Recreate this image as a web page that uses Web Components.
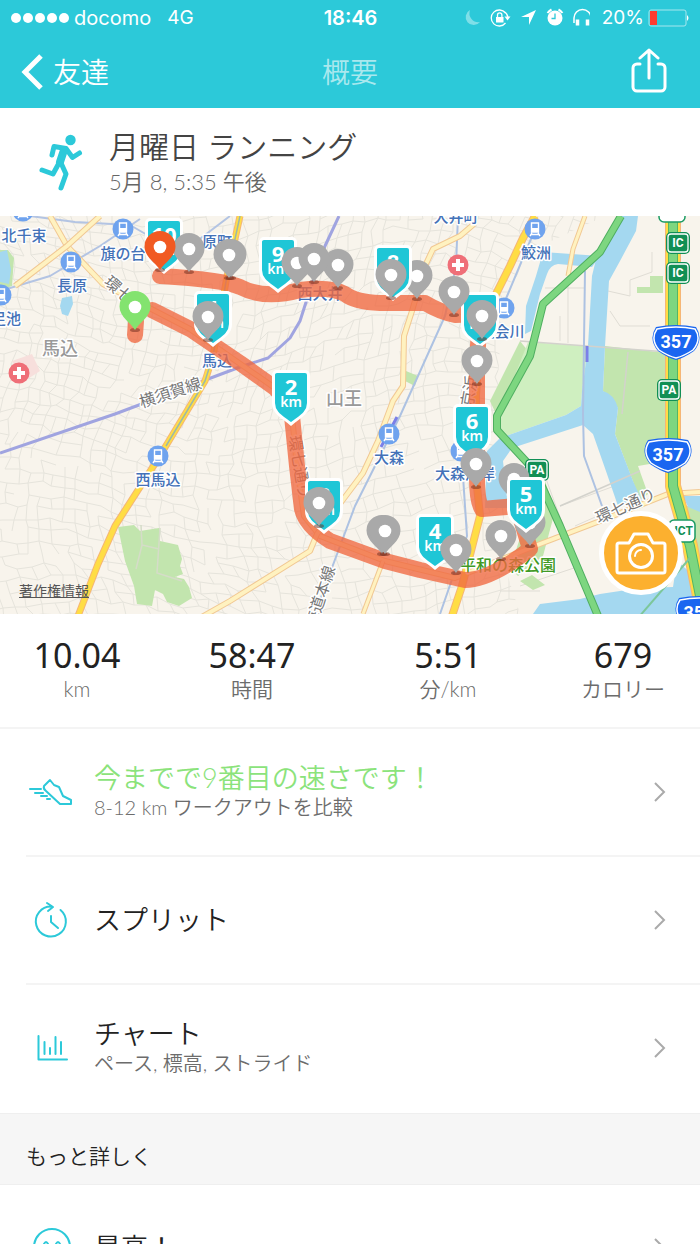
<!DOCTYPE html>
<html lang="ja">
<head>
<meta charset="utf-8">
<meta name="viewport" content="width=device-width, initial-scale=1">
<title>概要</title>
<style>
body {
    margin: 0;
    font-family: Lato, "Noto Sans CJK JP", sans-serif;
    color: #222;
    background-color: #fff;
    --teal: #2cc9d9;
    --muted: #6c6c6c;
    --line: #f4f4f4;
}
</style>
</head>
<body>
<workout-app>
    <status-bar slot="top" carrier="docomo" network="4G" time="18:46" battery="20%"></status-bar>
    <nav-bar slot="top" back="友達">概要</nav-bar>
    <workout-header>
        <span slot="title">月曜日 ランニング</span>
        <span slot="date">5月 8, 5:35 午後</span>
    </workout-header>
    <route-map></route-map>
    <stat-row>
        <stat-item value="10.04">km</stat-item>
        <stat-item value="58:47">時間</stat-item>
        <stat-item value="5:51">分/km</stat-item>
        <stat-item value="679">カロリー</stat-item>
    </stat-row>
    <detail-row icon="shoe" class="best">今までで9番目の速さです！<span slot="sub">8-12 km ワークアウトを比較</span></detail-row>
    <detail-row icon="split">スプリット</detail-row>
    <detail-row icon="chart" class="last">チャート<span slot="sub">ペース, 標高, ストライド</span></detail-row>
    <section-title>もっと詳しく</section-title>
    <detail-row icon="smile">最高！</detail-row>
</workout-app>

<script>
function define(name, html, setup) {
  const template = document.createElement('template');
  template.innerHTML = html;
  customElements.define(name, class extends HTMLElement {
    constructor() {
      super();
      this.attachShadow({ mode: 'open' });
      this.shadowRoot.appendChild(template.content.cloneNode(true));
    }
    connectedCallback() {
      if (setup) setup(this, this.shadowRoot);
    }
  });
}

define('workout-app', `
<style>
:host {
    display: flex;
    flex-direction: column;
    height: 100vh;
}
header {
    background-color: var(--teal);
}
main {
    flex: 1;
    min-height: 0;
    overflow-y: auto;
    scrollbar-width: none;
}
</style>
<header><slot name="top"></slot></header>
<main><slot></slot></main>
`);

define('status-bar', `
<style>
:host {
    display: grid;
    grid-template-columns: 1fr auto 1fr;
    align-items: center;
    height: 36px;
    padding: 0 10px 0 11px;
    color: #fff;
    font: 20px/24px Inter, sans-serif;
}
div {
    display: flex;
    align-items: center;
}
.dots {
    display: flex;
    gap: 2px;
    margin-right: 5px;
}
.dots i {
    width: 10px;
    height: 10px;
    border-radius: 50%;
    background-color: #fff;
}
.network {
    margin-left: 16px;
    font-size: 19px;
}
.time {
    font-weight: 600;
}
.right {
    justify-content: flex-end;
}
.battery {
    margin: 0 4px 0 12px;
    font-size: 19px;
}
svg {
    display: block;
}
</style>
<div>
    <span class="dots"><i></i><i></i><i></i><i></i><i></i></span>
    <span class="carrier"></span><span class="network"></span>
</div>
<span class="time"></span>
<div class="right">
    <svg width="130" height="24" viewBox="460 6 130 24" fill="none" stroke="#fff">
        <path d="M470 10a8 8 0 1 0 10 12a9 9 0 0 1-10-12z" fill="#7fdfe8" stroke="none"/>
        <path d="M505.500 13a8 8 0 1 0 0 10M504 11.500a8 8 0 0 1 4 6" stroke-width="1.300"/>
        <path d="M504.500 16.500h6l-3 4z" fill="#fff" stroke="none"/>
        <rect x="496" y="17" width="7.500" height="5.500" fill="#fff" stroke="none"/>
        <path d="M497.500 17v-2a2.200 2.200 0 0 1 4.400 0v2" stroke-width="1.300"/>
        <path d="M521 17l15-7l-7 15v-8z" fill="#fff" stroke="none"/>
        <circle cx="555" cy="18" r="7.500" fill="#fff" stroke="none"/>
        <path d="M547.500 13a12 12 0 0 1 4-3.500M558.500 9.500a12 12 0 0 1 4 3.500" stroke-width="2"/>
        <path d="M555 13.500v5h-3.500" stroke="#2cc9d9" stroke-width="1.300"/>
        <path d="M574 23v-5a8.500 8.500 0 0 1 17 0v5" stroke-width="1.500"/>
        <path d="M577.500 19.500v6M587.500 19.500v6" stroke-width="3.500"/>
    </svg>
    <span class="battery"></span>
    <svg width="42" height="18" viewBox="0 0 42 18">
        <rect x="1" y="1" width="37" height="16" rx="2" fill="none" stroke="#a5e7ee"/>
        <rect x="2" y="2" width="7" height="14" fill="#ff3b30"/>
        <path d="M39 6q3 3 0 6z" fill="#fff"/>
    </svg>
</div>
`, (el, root) => {
  for (const key of ['carrier', 'network', 'time', 'battery']) {
    root.querySelector('.' + key).textContent = el.getAttribute(key);
  }
});

define('nav-bar', `
<style>
:host {
    display: grid;
    grid-template-columns: 1fr auto 1fr;
    align-items: center;
    height: 72px;
    padding: 0 30px 0 20px;
    font-size: 28px;
    font-weight: 350;
    line-height: 40px;
}
button {
    display: flex;
    align-items: center;
    gap: 9px;
    padding: 0;
    border: none;
    background-color: transparent;
    color: #fff;
    font: inherit;
    cursor: pointer;
}
.share {
    justify-self: end;
}
h1 {
    margin: 0 0 0 10px;
    font: inherit;
    color: #a9e8ee;
}
</style>
<button class="back">
    <svg width="24" height="36" viewBox="0 0 24 36" fill="none" stroke="#fff" stroke-width="5"><path d="M21 2L5 18l16 16"/></svg>
    <span></span>
</button>
<h1><slot></slot></h1>
<button class="share" aria-label="共有">
    <svg width="42" height="48" viewBox="0 0 42 48" fill="none" stroke="#fff" stroke-width="3" stroke-linecap="round" stroke-linejoin="round">
        <path d="M12 16H9a4 4 0 0 0-4 4v19a4 4 0 0 0 4 4h24a4 4 0 0 0 4-4V20a4 4 0 0 0-4-4h-3M21 30V2M12 10l9-8l9 8"/>
    </svg>
</button>
`, (el, root) => {
  root.querySelector('.back span').textContent = el.getAttribute('back');
});

define('workout-header', `
<style>
:host {
    display: flex;
    align-items: center;
    gap: 24px;
    height: 108px;
    padding: 0 36px;
    font-weight: 350;
}
h2, p {
    margin: 0;
    font: inherit;
}
h2 {
    font-size: 30px;
    line-height: 40px;
    color: #444;
}
p {
    font-size: 22px;
    line-height: 32px;
    color: #666;
}
</style>
<svg width="49" height="60" viewBox="0 0 49 60" fill="none" stroke="#2cc9d9" stroke-width="5" stroke-linecap="round" stroke-linejoin="round">
    <circle cx="34.500" cy="8" r="5.200" fill="#2cc9d9" stroke="none"/>
    <path d="M16 23l2-8.500l12 2l6.500 9l7-4.500M25 31l5 11l-5 14M23 31l-6 11l-11-4"/>
    <path d="M28 18l-4 12" stroke-width="8"/>
</svg>
<div>
    <h2><slot name="title"></slot></h2>
    <p><slot name="date"></slot></p>
</div>
`);

define('map-pin', `
<style>
:host {
    position: absolute;
    width: 32px;
    height: 42px;
    transform: translate(-50%, -39px);
    color: #a9a9a9;
}
svg {
    display: block;
}
</style>
<svg width="32" height="42" viewBox="0 0 32 42">
    <ellipse cx="16" cy="39" rx="5" ry="2" fill="#6b2a1c" opacity=".5"/>
    <path d="M16 39C12 32 .5 26 .5 15.500a15.500 15.500 0 0 1 31 0C31.500 26 20 32 16 39z" fill="currentColor"/>
    <circle cx="16" cy="16" r="6.300" fill="#fff"/>
</svg>
`);

define('km-shield', `
<style>
:host {
    position: absolute;
    width: 38px;
    height: 56px;
    transform: translateX(-50%);
    color: #fff;
    font: 700 22px/22px "Noto Sans", sans-serif;
    text-align: center;
}
svg {
    position: absolute;
    inset: 0;
}
div {
    position: relative;
    padding-top: 5px;
}
small {
    display: block;
    font-size: 14px;
    font-weight: 600;
    line-height: 10px;
}
</style>
<svg width="38" height="56" viewBox="0 0 38 56">
    <path d="M5 1.500h28a3.500 3.500 0 0 1 3.500 3.500v28c0 10-9 14-17.500 21C10.500 47 1.500 43 1.500 33V5A3.500 3.500 0 0 1 5 1.500z" fill="#1fc6d6" stroke="#fff" stroke-width="3"/>
</svg>
<div><slot></slot><small>km</small></div>
`);

// Map drawing space is 700 x 398; markers are placed in the same space.
const MAP_W = 700;
const MAP_H = 398;

const shields = [
  [164, 2, '10'], [213, 75, '1'], [291, 154, '2'], [278, 21, '9'], [393, 29, '8'],
  [480, 76, '7'], [324, 262, '3'], [435, 298, '4'], [472, 188, '6'], [526, 261, '5']
];
const pinsBehind = [[417, 83], [514, 286], [530, 330]];
const pins = [
  [189, 56], [231, 62], [229, 62], [208, 124], [297, 70], [338, 72], [314, 66], [391, 82],
  [454, 99], [477, 168], [482, 123], [476, 271],
  [501, 343], [319, 310], [382, 338], [385, 338], [456, 357]
];
const stations = [
  [123, 13], [71, 46], [1, 79], [23, -5], [535, 13], [504, 92], [389, 218], [158, 240], [461, 235]
];
// x, y, text, class, rotation
const labels = [
  [24, 25, '北千束'], [123, 43, '旗の台'], [72, 75, '長原'], [6, 108, '足池'],
  [217, 31, '原町'], [217, 150, '馬込'], [158, 269, '西馬込'], [320, 83, '西大井'],
  [456, 6, '大井町'], [536, 42, '鮫洲'], [502, 121, '立会川'], [389, 247, '大森'],
  [465, 263, '大森海岸'],
  [60, 139, '馬込', 'area'], [344, 189, '山王', 'area'],
  [508, 355, '平和の森公園', 'park'],
  [172, 182, '横須賀線', 'road', -18], [115, 78, '環七', 'road', 42],
  [294, 252, '環七通り', 'road', 80], [628, 295, '環七通り', 'road', -24],
  [323, 390, '東海道本線', 'road', -72], [475, 176, '京浜', 'road', -80]
];

// Minor streets: a bent grid with some of its segments left out.
function streets() {
  let seed = 7;
  const rnd = () => (seed = (seed * 16807) % 2147483647) / 2147483647;
  const cols = 66;
  const rows = 42;
  const points = [];
  for (let j = 0; j < rows; j++) {
    for (let i = 0; i < cols; i++) {
      const x = i * 12 - 40;
      const y = j * 12 - 40;
      points.push([
        Math.round(x + 20 * Math.sin(y / 70 + x / 190) + rnd() * 6),
        Math.round(y + 22 * Math.sin(x / 80 - y / 160) + rnd() * 6)
      ]);
    }
  }
  let d = '';
  for (let j = 0; j < rows - 1; j++) {
    for (let i = 0; i < cols - 1; i++) {
      const p = points[j * cols + i];
      if (rnd() < 0.85) d += `M${p}L${points[j * cols + i + 1]}`;
      if (rnd() < 0.75) d += `M${p}L${points[(j + 1) * cols + i]}`;
    }
  }
  return d;
}

const road = (d, color, edge, width) =>
  `<path d="${d}" stroke="${edge}" stroke-width="${width + 2}"/><path d="${d}" stroke="${color}" stroke-width="${width}"/>`;

const rail = (d, color, width) => `<path d="${d}" stroke="${color}" stroke-width="${width}"/>`;

const train = ([x, y]) => `
<g transform="translate(${x} ${y})">
    <circle r="10.500" fill="#6fa3ee"/>
    <path d="M-3.500-6h7v9h-7zM-3 4l-2 3M3 4l2 3M-4 5.500h8" fill="none" stroke="#fff" stroke-width="1.400"/>
    <path d="M-3-1h6v4h-6z" fill="#fff"/>
</g>`;

const hospital = (x, y) => `
<circle cx="${x}" cy="${y}" r="10.500" fill="#ef6f78"/>
<path d="M${x - 6} ${y}h12M${x} ${y - 6}v12" stroke="#fff" stroke-width="4"/>`;

const badge = (x, y, text) => `
<g transform="translate(${x} ${y})">
    <rect x="-12" y="-11" width="24" height="22" rx="5" fill="#118f55"/>
    <rect x="-10" y="-9" width="20" height="18" rx="3" fill="none" stroke="#fff" stroke-width="1.300"/>
    <text class="sign small" y="4">${text}</text>
</g>`;

const whiteBadge = (x, y, text) => `
<g transform="translate(${x} ${y})">
    <rect x="-13" y="-11" width="26" height="22" rx="5" fill="#fff" stroke="#1a9b62" stroke-width="1.500"/>
    <text class="sign small green" y="4">${text}</text>
</g>`;

const route357 = (x, y) => `
<g transform="translate(${x} ${y})">
    <path d="M-20-15Q0-19 20-15Q28-3 18 9Q8 16 0 18Q-8 16-18 9Q-28-3-20-15z" fill="#1a66f0"/>
    <path d="M-19-13Q0-17 19-13Q26-3 17 8Q8 14 0 16Q-8 14-17 8Q-26-3-19-13z" fill="none" stroke="#fff" stroke-width="1.500"/>
    <text class="sign" y="6">357</text>
</g>`;

define('route-map', `
<style>
:host {
    display: block;
    position: relative;
    aspect-ratio: 350 / 199;
    overflow: hidden;
    background-color: #f8f4ec;
}
svg.base {
    display: block;
    width: 100%;
    height: 100%;
}
text {
    font: 500 15px "Noto Sans CJK JP", sans-serif;
    text-anchor: middle;
    fill: #4472b8;
    stroke: #fff;
    stroke-width: 3px;
    stroke-linejoin: round;
    paint-order: stroke;
}
text.area {
    font-size: 18px;
    fill: #999;
}
text.park {
    font-size: 16px;
    fill: #3f9a24;
}
text.road {
    font-size: 16px;
    font-weight: 400;
    fill: #777;
}
text.sign {
    font-family: Roboto, sans-serif;
    font-size: 18px;
    font-weight: 700;
    fill: #fff;
    stroke: none;
}
text.small {
    font-size: 12px;
}
text.green {
    fill: #118f55;
}
.legal {
    position: absolute;
    left: 19px;
    bottom: 13px;
    font-size: 14px;
    line-height: 20px;
    color: #555;
}
.start {
    color: #83e36f;
}
.finish {
    color: #f15a22;
}
.photo {
    position: absolute;
    right: 17px;
    bottom: 19px;
    display: grid;
    place-items: center;
    width: 84px;
    height: 84px;
    padding: 0;
    border: 5px solid #fff;
    border-radius: 50%;
    background-color: #fcb02f;
    cursor: pointer;
}
</style>
<svg class="base" viewBox="0 0 700 398" preserveAspectRatio="xMidYMid slice">
    <path d="${streets()}" fill="none" stroke="#e6e4dc" stroke-width="1"/>
    <path d="M500 128L510 68L545 28L605 0H700V398H520L495 320L515 280L495 220z" fill="#f8f4ec"/>
    <path d="M560 100v25M568 60v67M545 72h40M608 75l22 5v-16l22-8V36M610 95l10 15h30M560 290l60-22M575 310l45-20M520 370l60-20M545 260l40 110M500 375h40" fill="none" stroke="#e0ddd5"/>
    <g fill="#c2e5ae">
        <path d="M8 34l6 8l-2 28l-12 4v-40z"/>
        <path d="M118 311l16-2l6 6l19-3l1 13l18 4l4 14l-2 7l3 8l-8 3l9 2l5 8l3 11l-13 8l-12-4l-4-8l-8-4l-3 16l-15-2l-3-18l-9-25z"/>
        <path d="M520 125L490 185L497 200L532 140z"/>
        <path d="M605 130L667 137V245L638 250L648 278L640 284L615 218L618 192L603 175z"/>
        <path d="M406 155l12 5l-3 10l-10-5z"/>
        <path d="M650 60h13v17h-26v-6h13z"/>
        <path d="M545 265l10 30l-12 45l-25 20l-8-8l20-60z"/>
        <path d="M520 365l12-6l13 10l-12 5zM676 290h24v60l-15-8z"/>
    </g>
    <path d="M528 126L588 130L582 175L581 190L566 199L500 222L497 205z" fill="#cfefc0"/>
    <path d="M12 145l20-7l8 17l-20 13z" fill="#f7dfdc"/>
    <path d="M141 309l1 20l17 4M160 312l-3 45l25 8M142 329l-6 24" fill="none" stroke="#d5dcc8" stroke-width="1.500"/>
    <g fill="#a4d8f0">
        <path d="M0 36l7-2l4 20l-2 14l-9-2z"/>
        <path d="M62 82l10-2l1 8l-5 12l-6-2l-2-8z"/>
        <path d="M543 36L600 40L592 51L558 48Q550 49 547 58L540 78L531 115L525 118L526 90L536 60z"/>
        <path d="M621 0H638L636 15L620 45L609 65L605 130L603 175Q614 178 618 192L615 218L633 265L642 285L618 290L607 258L593 218L583 209L512 232L503 245L508 292H485L487 235L500 222L566 199L581 190L582 175L588 130L592 60L598 35z"/>
        <path d="M533 398L540 388L580 383L600 378L640 372L673 371L677 345L700 365V398zM683 280h17v16l-12-5z"/>
    </g>
    <path d="M520 125L668 136M628 136L622 198M560 290L640 255" fill="none" stroke="#d3d2cc" stroke-width="1.500"/>
    <g fill="none" stroke-linejoin="round">
        ${rail('M30 0L75 6L130 9L180 38L230 0M0 75L50 60L100 30L140 3', '#b3c4e3', 2)}
        ${rail('M458 0L456 50L445 100L400 200L355 290L327 365L315 398M533 18L505 85M463 260L467 320L440 398M585 55L583 198L584 240L602 290', '#adc2e2', 2)}
        ${rail('M0 237L115 198L240 151L268 142L290 122L300 105L308 80L325 30L339 0', '#a0a4e0', 3)}
        <path d="M587 130v16M397 201l-16 30" stroke="#7b80e8" stroke-width="3"/>
        ${road('M50 0L67 30L103 68L190 113L275 172L291 190L297 250L304 300L320 320L385 345L455 362L540 328L600 305L668 278L700 276', '#fff2c0', '#f1c893', 4)}
        ${road('M100 0L67 30L15 70', '#fff2c0', '#f1c893', 4)}
        ${road('M474 8L460 20L433 33L425 50L412 95L404 120L403 170L393 185L378 225L363 257L345 281L317 318L310 335L230 385L200 402', '#fff2c0', '#f1c893', 4)}
        ${road('M383 345L363 398M585 0L573 33L568 60', '#fff2c0', '#f1c893', 3)}
        ${road('M240 0L227 60L213 140L205 165L158 243L115 310L98 348L78 400', '#ffdd45', '#f5b676', 5)}
        ${road('M535 0L523 22L510 50L480 110L476 180L477 270L480 300L462 370L452 400', '#ffdd45', '#f5b676', 6)}
        <path d="M240 0L227 60L213 140L205 165L166 230" stroke="#9db9a8" stroke-width="1.500"/>
        ${road('M673 0V270L690 330L704 400', '#ffdd45', '#f5b676', 14)}
        ${road('M673 0V270L690 330L704 400', '#7dd680', '#55b565', 8)}
        ${road('M621 0L600 36L543 88L530 140L497 200L497 214L535 255L560 310L598 400', '#7dd680', '#4fae60', 6)}
        <path d="M638 402L690 342" stroke="#7cc79a" stroke-width="2"/>
    </g>
    ${stations.map(train).join('')}
    ${hospital(19, 157)}${hospital(458, 49)}
    ${labels.map(([x, y, text, type = '', turn = 0]) =>
      `<text x="${x}" y="${y}" class="${type}" transform="rotate(${turn} ${x} ${y})">${text}</text>`).join('')}
    <g fill="none" stroke="#ef6840" stroke-width="16" stroke-linecap="round" stroke-linejoin="round" opacity=".78">
        <path d="M136 105L135 119M152 94L190 113L240 147L275 172L291 190L297 250L302 293Q306 310 330 325L385 345L420 354L465 364Q490 364 530 333L517 290L482 293Q477 285 477 262V145L480 98L455 99Q440 96 425 87L380 87Q355 86 345 78Q330 70 300 74Q265 84 240 71Q225 64 160 60"/>
    </g>
    ${badge(678, 27, 'IC')}${badge(678, 57, 'IC')}${badge(669, 174, 'PA')}${badge(537, 254, 'PA')}
    ${whiteBadge(672, -5, '331')}${whiteBadge(682, 315, 'JCT')}
    ${route357(676, 126)}${route357(668, 239)}${route357(699, 397)}
</svg>
<div class="markers"></div>
<a class="legal" href="#legal">著作権情報</a>
<button class="photo" aria-label="写真を追加">
    <svg width="52" height="44" viewBox="0 0 52 44" fill="none" stroke="#fff" stroke-width="3" stroke-linejoin="round">
        <path d="M4 12h10l5-9h14l5 9h10a2 2 0 0 1 2 2v26a2 2 0 0 1-2 2H4a2 2 0 0 1-2-2V14a2 2 0 0 1 2-2z"/>
        <circle cx="26" cy="25" r="11.500"/>
        <path d="M20 25a6 6 0 0 1 6-6" stroke-width="2" stroke-linecap="round"/>
    </svg>
</button>
`, (el, root) => {
  const layer = root.querySelector('.markers');
  const place = (tag, x, y, text = '', name = '') => {
    const marker = document.createElement(tag);
    marker.className = name;
    marker.textContent = text;
    marker.style.left = `${x / MAP_W * 100}%`;
    marker.style.top = `${y / MAP_H * 100}%`;
    layer.appendChild(marker);
  };
  pinsBehind.forEach(([x, y]) => place('map-pin', x, y));
  shields.forEach(([x, y, km]) => place('km-shield', x, y, km));
  pins.forEach(([x, y]) => place('map-pin', x, y));
  place('map-pin', 135, 114, '', 'start');
  place('map-pin', 160, 54, '', 'finish');
});

define('stat-row', `
<style>
:host {
    display: grid;
    grid-template-columns: 22fr 28fr 28fr 22fr;
    align-items: center;
    box-sizing: border-box;
    height: 115px;
    border-bottom: 2px solid var(--line);
}
</style>
<slot></slot>
`);

define('stat-item', `
<style>
:host {
    display: block;
    text-align: center;
}
strong, span {
    display: block;
}
strong {
    font-family: "Noto Sans", sans-serif;
    font-size: 34px;
    font-weight: 400;
    line-height: 36px;
}
span {
    font-size: 21px;
    font-weight: 350;
    line-height: 32px;
    color: var(--muted);
}
</style>
<strong></strong>
<span><slot></slot></span>
`, (el, root) => {
  root.querySelector('strong').textContent = el.getAttribute('value');
});

const icons = {
  shoe: '<path d="M24 13l-6 6q-1 3 2 5l14 13h11v-4l-8-4l-4-9l-5-2zM4 22h11M9 26h8M15 29h6M21 32h3"/>',
  split: '<path d="M34.500 15a15 15 0 1 1-9-3.500M21 8l6 4l-5 4M25 21v6l7 6"/>',
  chart: '<path d="M12.500 13v23.500H41M18.500 19v12M24 25v6M29.500 14v17M35 19v12"/>',
  smile: '<circle cx="26" cy="24" r="18"/><path d="M18 21q2-4 4 0M30 21q2-4 4 0M17 29q9 10 18 0"/>'
};

define('detail-row', `
<style>
:host {
    display: block;
    padding-left: 26px;
}
:host(.last) button {
    border-bottom-color: transparent;
}
:host(.best) .title {
    color: #8be37b;
}
button {
    display: flex;
    align-items: center;
    gap: 18px;
    width: 100%;
    height: 128px;
    padding: 0 34px 0 0;
    border: none;
    border-bottom: 2px solid var(--line);
    background-color: transparent;
    color: inherit;
    font: inherit;
    text-align: left;
    cursor: pointer;
}
.text {
    flex: 1;
    font-weight: 350;
}
.title {
    display: block;
    font-size: 27px;
    line-height: 30px;
}
::slotted(span) {
    display: block;
    font-size: 20px;
    line-height: 28px;
    color: var(--muted);
}
</style>
<button>
    <svg class="icon" width="50" height="50" viewBox="0 0 50 50" fill="none" stroke="#2cc9d9" stroke-width="2" stroke-linecap="round" stroke-linejoin="round"></svg>
    <span class="text"><span class="title"><slot></slot></span><slot name="sub"></slot></span>
    <svg width="12" height="20" viewBox="0 0 12 20" fill="none" stroke="#aaa" stroke-width="2"><path d="M1 1l9 9l-9 9"/></svg>
</button>
`, (el, root) => {
  root.querySelector('.icon').innerHTML = icons[el.getAttribute('icon')];
});

define('section-title', `
<style>
:host {
    display: flex;
    align-items: flex-end;
    box-sizing: border-box;
    height: 72px;
    padding: 0 26px 12px;
    border: solid #efefef;
    border-width: 1px 0;
    background-color: #f6f6f6;
}
h3 {
    margin: 0;
    font-size: 21px;
    font-weight: 350;
    line-height: 32px;
}
</style>
<h3><slot></slot></h3>
`);
</script>
</body>
</html>
